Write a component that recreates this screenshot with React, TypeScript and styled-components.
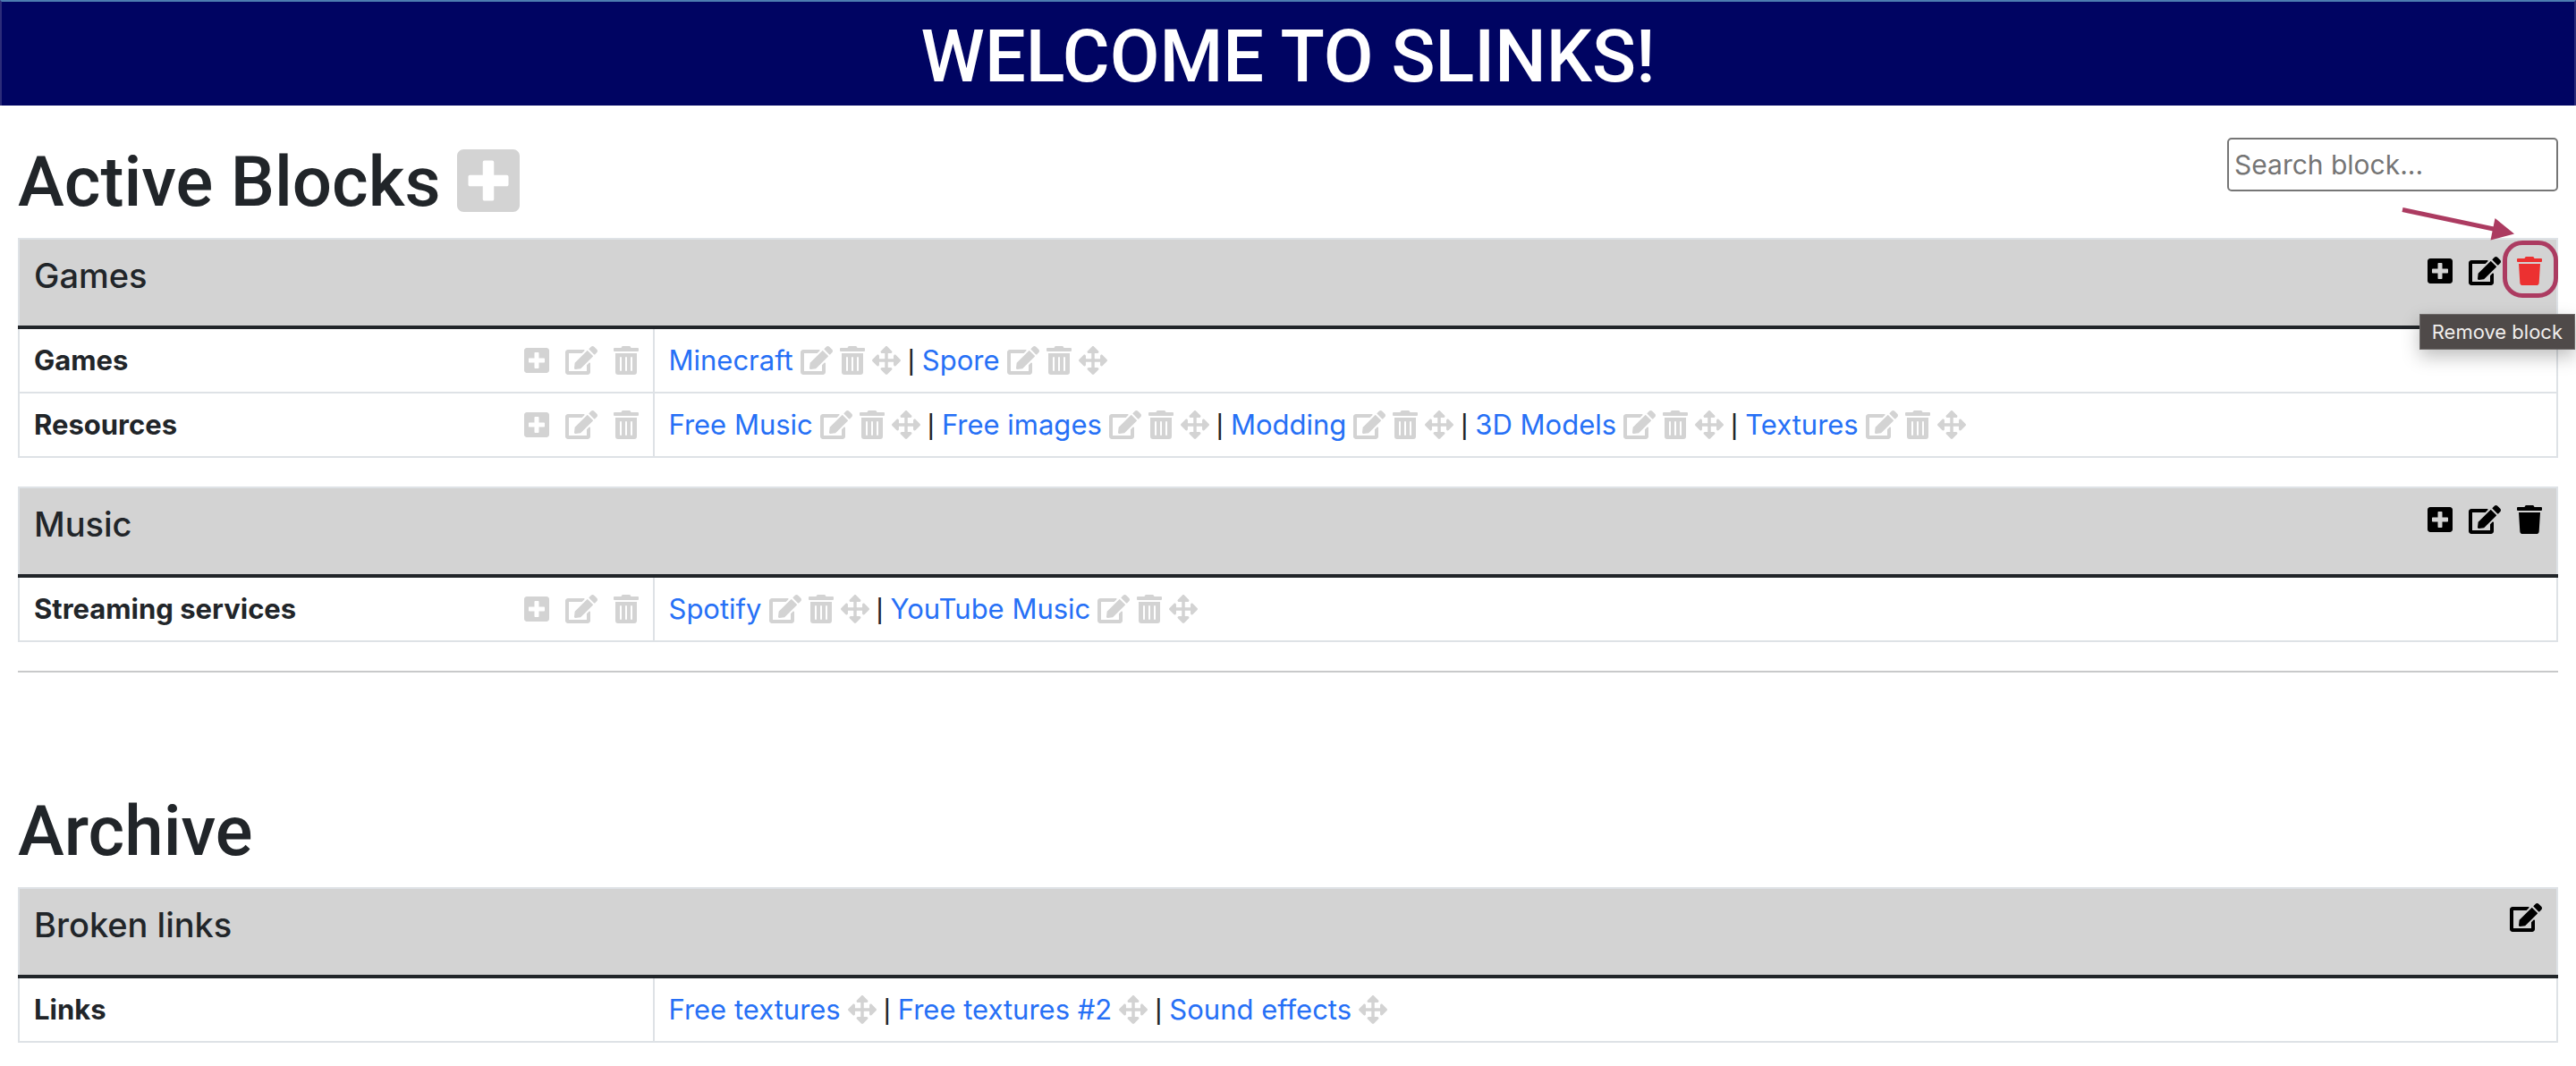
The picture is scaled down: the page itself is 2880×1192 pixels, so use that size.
import React from 'react';
import styled, { createGlobalStyle, css } from 'styled-components';
import { FaArrowsAlt, FaEdit, FaPlusSquare, FaTrash, FaTrashAlt } from 'react-icons/fa';

const GlobalStyle = createGlobalStyle`
  *, *::before, *::after { box-sizing: border-box; }
  body {
    margin: 0;
    background: #fff;
    color: #212529;
    font-family: Inter, "Liberation Sans", sans-serif;
    font-size: 31px;
    line-height: 48px;
    overflow-x: hidden;
  }
`;

const Banner = styled.header`
  padding: 12px 0 4px;
  border: 2px solid #2c2c79;
  border-top-color: #4c7cb0;
  border-bottom: 0;
  background: #000462;
  color: #fff;
  text-align: center;
`;

const titleText = css`
  margin: 0;
  font-family: Roboto, Inter, sans-serif;
  font-weight: 500;
  line-height: 100px;
`;

const BannerTitle = styled.h1`
  ${titleText}
  font-size: 81px;
`;

const Page = styled.main`
  padding: 36px 20px 26px;
`;

const TitleRow = styled.div`
  display: flex;
  justify-content: space-between;
  align-items: flex-start;
  margin-bottom: 12px;
`;

const SectionTitle = styled.h2`
  ${titleText}
  display: flex;
  align-items: flex-start;
  gap: 18px;
  font-size: 78px;
`;

const SearchBox = styled.input`
  width: 370px;
  height: 60px;
  padding: 2px 6px;
  border: 2px solid #767676;
  border-radius: 5px;
  background: #fff;
  color: #212529;
  font-family: inherit;
  font-size: 30px;
  &::placeholder { color: #757575; opacity: 1; }
`;

const glyphWidth = { narrow: 28, square: 32, wide: 36 };

const IconButton = styled.button<{ $shape: keyof typeof glyphWidth; $tone?: string }>`
  position: relative;
  display: flex;
  padding: 0;
  border: 0;
  background: none;
  color: ${(p) => p.$tone ?? 'lightgray'};
  font: inherit;
  cursor: pointer;
  > svg {
    width: ${(p) => glyphWidth[p.$shape]}px;
    height: 32px;
  }
`;

const AddBlockButton = styled.button`
  display: flex;
  padding: 8px 0;
  border: 0;
  background: none;
  color: lightgray;
  cursor: pointer;
  svg { width: 70px; height: 80px; }
`;

const BlockTable = styled.table`
  width: 100%;
  margin-bottom: 32px;
  border-collapse: collapse;
  table-layout: fixed;
  td, tbody th { border: 2px solid #dee2e6; }
`;

const NameCol = styled.col`
  width: 25%;
`;

const BlockHead = styled.th`
  padding: 16px;
  border: 2px solid #dee2e6;
  border-bottom: 4px solid #212529;
  background: lightgray;
  font-weight: 400;
`;

const HeadBar = styled.div`
  display: flex;
  justify-content: space-between;
  align-items: flex-start;
`;

const BlockName = styled.h3`
  margin: 0 0 16px;
  font-size: 38px;
  font-weight: 500;
  line-height: 48px;
`;

const HeadActions = styled.div<{ $archived: boolean }>`
  display: flex;
  gap: 18px;
  padding-top: ${(p) => (p.$archived ? '0' : '3px')};
`;

const RowHead = styled.th`
  padding: 11px 16px;
  text-align: left;
  font-weight: 700;
`;

const RowBar = styled.div`
  display: flex;
  justify-content: space-between;
  align-items: center;
`;

const RowActions = styled.div`
  display: flex;
  gap: 18px;
`;

const LinkCell = styled.td`
  padding: 11px 16px;
`;

const LinkList = styled.div`
  display: flex;
  flex-wrap: wrap;
  align-items: center;
  gap: 8px;
`;

const LinkItem = styled.span`
  display: flex;
  align-items: center;
  gap: 8px;
`;

const Separator = styled.span`
  font-family: "Liberation Sans", sans-serif;
`;

const Anchor = styled.a`
  color: #2670f6;
  text-decoration: none;
`;

const Divider = styled.hr`
  height: 2px;
  margin: 0 0 128px;
  border: 0;
  background: #c8c9ca;
`;

const Ring = styled.span`
  position: absolute;
  top: -18px;
  left: -16px;
  width: 62px;
  height: 64px;
  border: 5px solid #ac3b61;
  border-radius: 22px;
`;

const Pointer = styled.svg`
  && {
    position: absolute;
    top: -57px;
    left: -130px;
    width: 130px;
    height: 42px;
  }
`;

const Tooltip = styled.span`
  position: absolute;
  z-index: 1;
  top: 64px;
  right: -37px;
  padding: 0 13px;
  border: 1px solid #6d6a69;
  background: #4f4a49;
  box-shadow: 0 8px 20px rgba(0, 0, 0, 0.25);
  color: #f0eeed;
  font-size: 22px;
  line-height: 38px;
  white-space: nowrap;
`;

type Row = { name: string; links: string[] };
type BlockProps = { name: string; rows: Row[]; archived?: boolean; highlighted?: boolean };

function RemoveHint() {
  return (
    <>
      <Ring />
      <Pointer viewBox="0 0 130 42" aria-hidden="true">
        <path d="M2 4.500 L106 26.500" stroke="#ac3b61" strokeWidth="5" fill="none" />
        <path d="M105.500 14 L127 31.500 L100.500 38.500 Z" fill="#ac3b61" />
      </Pointer>
      <Tooltip role="tooltip">Remove block</Tooltip>
    </>
  );
}

function Block({ name, rows, archived = false, highlighted = false }: BlockProps) {
  return (
    <BlockTable>
      <colgroup>
        <NameCol />
        <col />
      </colgroup>
      <thead>
        <tr>
          <BlockHead colSpan={2}>
            <HeadBar>
              <BlockName>{name}</BlockName>
              <HeadActions $archived={archived}>
                {!archived && (
                  <IconButton $shape="narrow" $tone="#000" aria-label="Add row"><FaPlusSquare /></IconButton>
                )}
                <IconButton $shape="wide" $tone="#000" aria-label="Edit block"><FaEdit /></IconButton>
                {!archived && (
                  <IconButton
                    $shape="narrow"
                    $tone={highlighted ? '#ec3131' : '#000'}
                    aria-label="Remove block"
                  >
                    <FaTrash />
                    {highlighted && <RemoveHint />}
                  </IconButton>
                )}
              </HeadActions>
            </HeadBar>
          </BlockHead>
        </tr>
      </thead>
      <tbody>
        {rows.map((row) => (
          <tr key={row.name}>
            <RowHead scope="row">
              <RowBar>
                {row.name}
                {!archived && (
                  <RowActions>
                    <IconButton $shape="narrow" aria-label="Add link"><FaPlusSquare /></IconButton>
                    <IconButton $shape="wide" aria-label="Edit row"><FaEdit /></IconButton>
                    <IconButton $shape="narrow" aria-label="Remove row"><FaTrashAlt /></IconButton>
                  </RowActions>
                )}
              </RowBar>
            </RowHead>
            <LinkCell>
              <LinkList>
                {row.links.map((link, i) => (
                  <React.Fragment key={link}>
                    {i > 0 && <Separator>|</Separator>}
                    <LinkItem>
                      <Anchor href="#">{link}</Anchor>
                      {!archived && (
                        <>
                          <IconButton $shape="wide" aria-label="Edit link"><FaEdit /></IconButton>
                          <IconButton $shape="narrow" aria-label="Remove link"><FaTrashAlt /></IconButton>
                        </>
                      )}
                      <IconButton $shape="square" aria-label="Move link"><FaArrowsAlt /></IconButton>
                    </LinkItem>
                  </React.Fragment>
                ))}
              </LinkList>
            </LinkCell>
          </tr>
        ))}
      </tbody>
    </BlockTable>
  );
}

export default function App() {
  return (
    <>
      <GlobalStyle />
      <Banner>
        <BannerTitle>WELCOME TO SLINKS!</BannerTitle>
      </Banner>
      <Page>
        <TitleRow>
          <SectionTitle>
            Active Blocks
            <AddBlockButton aria-label="Add block"><FaPlusSquare /></AddBlockButton>
          </SectionTitle>
          <SearchBox type="text" placeholder="Search block..." aria-label="Search block" />
        </TitleRow>
        <Block
          name="Games"
          highlighted
          rows={[
            { name: 'Games', links: ['Minecraft', 'Spore'] },
            { name: 'Resources', links: ['Free Music', 'Free images', 'Modding', '3D Models', 'Textures'] },
          ]}
        />
        <Block name="Music" rows={[{ name: 'Streaming services', links: ['Spotify', 'YouTube Music'] }]} />
        <Divider />
        <TitleRow>
          <SectionTitle>Archive</SectionTitle>
        </TitleRow>
        <Block
          name="Broken links"
          archived
          rows={[{ name: 'Links', links: ['Free textures', 'Free textures #2', 'Sound effects'] }]}
        />
      </Page>
    </>
  );
}
